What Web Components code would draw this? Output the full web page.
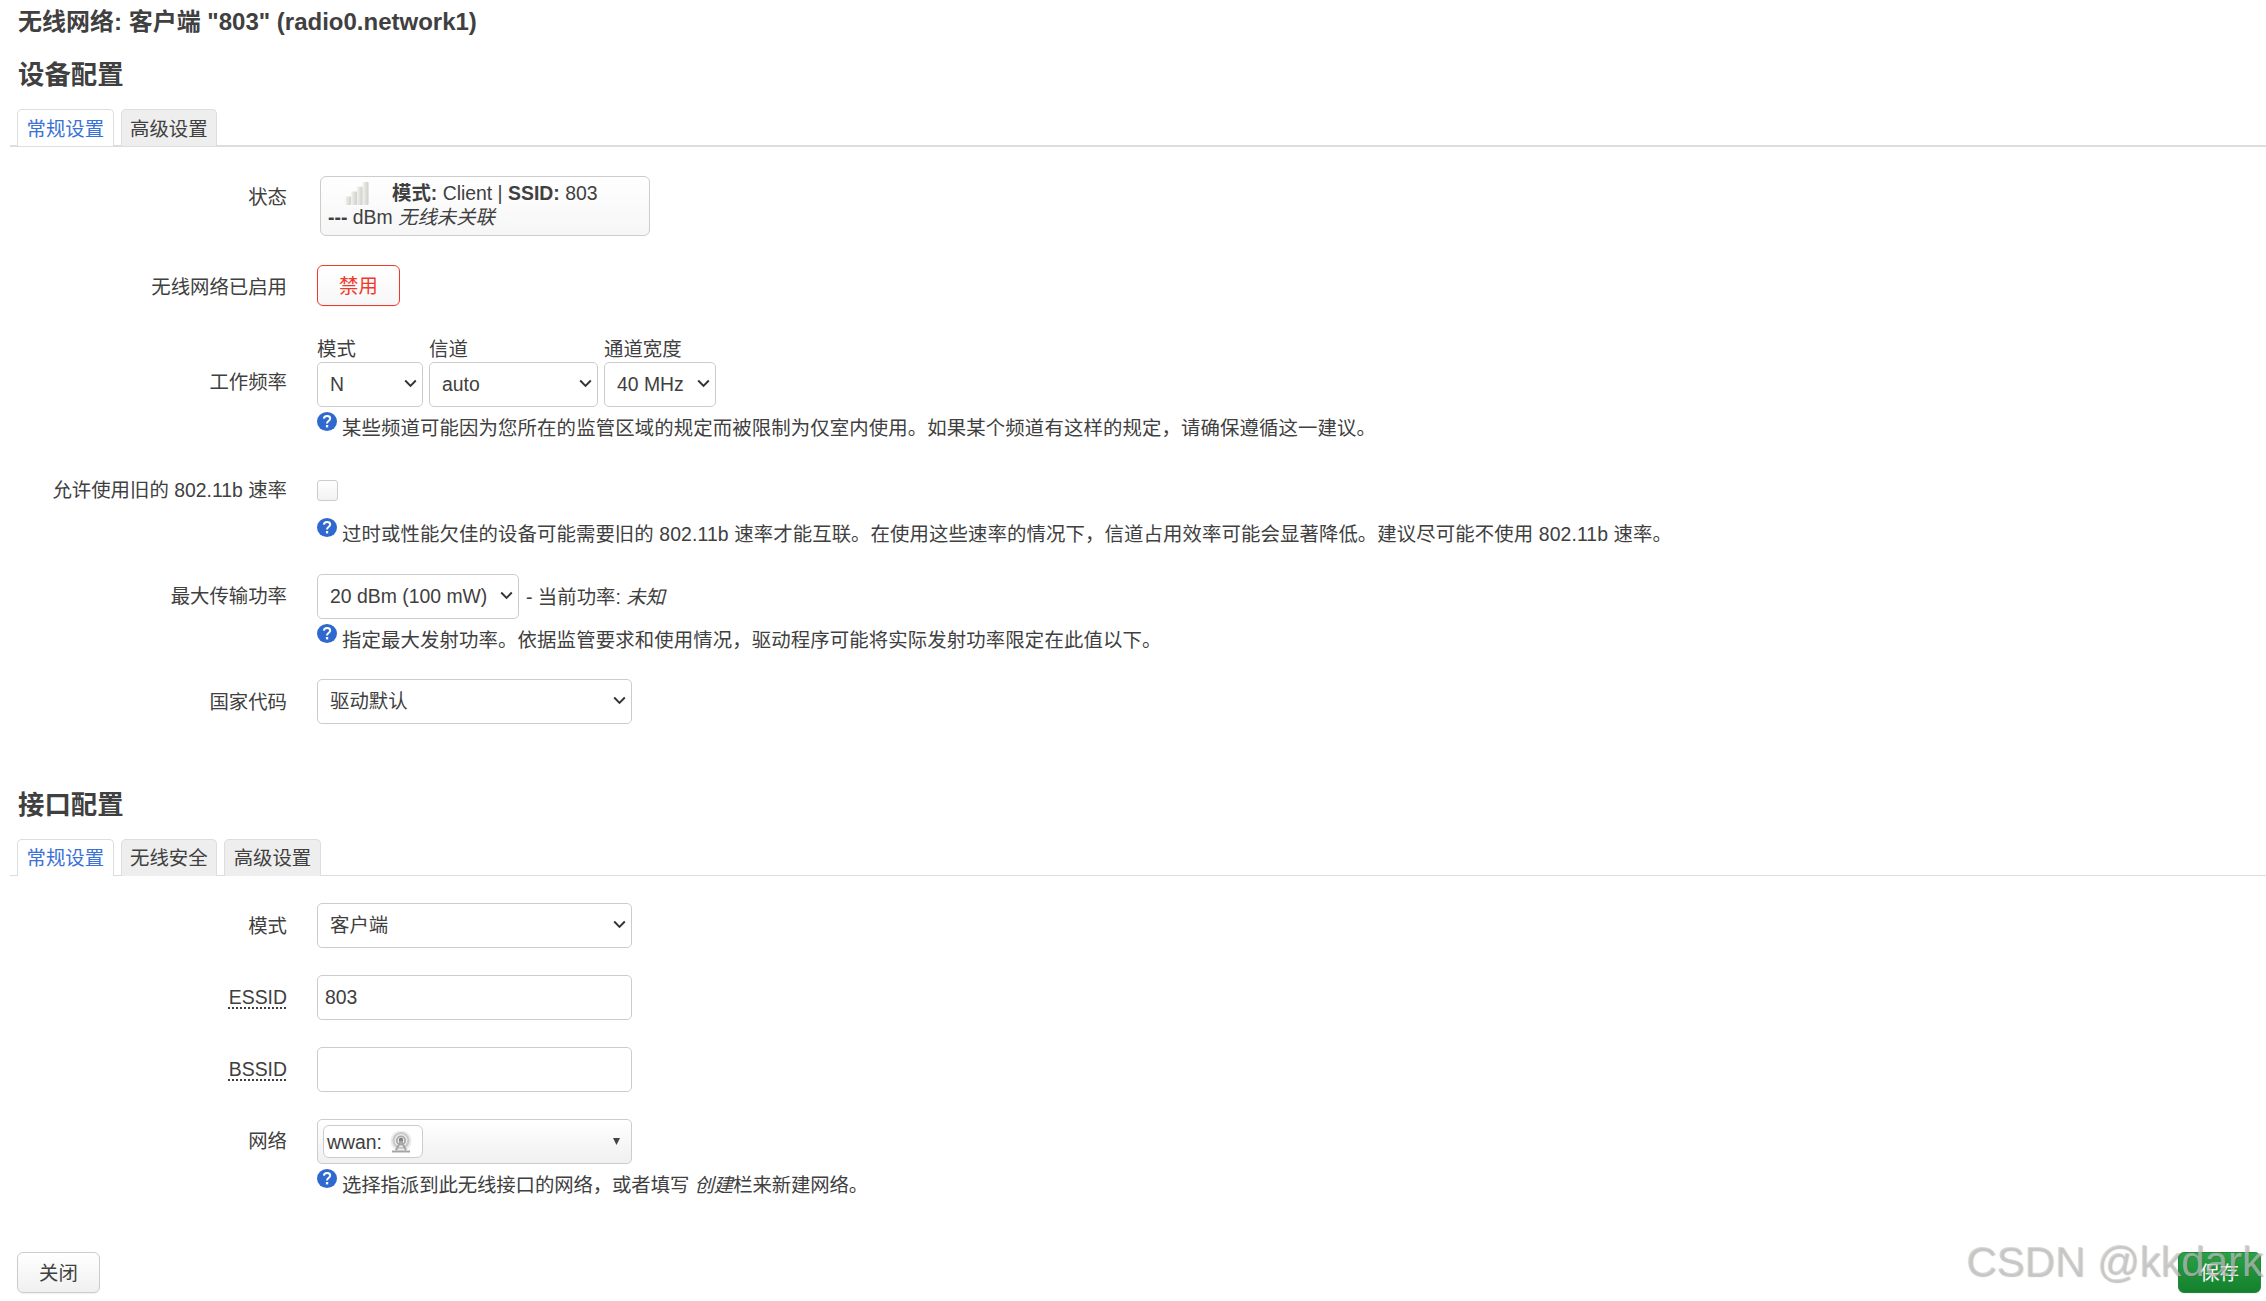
<!DOCTYPE html>
<html lang="zh-CN"><head><meta charset="utf-8"><title>无线网络</title>
<style>
html,body{margin:0;padding:0;background:#fff;overflow:hidden}
body{font:19.4px/28px "Liberation Sans","Noto Sans CJK SC",sans-serif;color:#404040}
abbr{text-decoration:underline dotted 2px;text-underline-offset:3px}
</style></head><body>
<x-page>
  <x-title>无线网络: 客户端 "803" (radio0.network1)</x-title>
  <x-h3>设备配置</x-h3>
  <x-tabs thick><x-tab active>常规设置</x-tab><x-tab>高级设置</x-tab></x-tabs>

  <x-row style="margin-top:29px;--lt:7px"><span slot="label">状态</span><x-status></x-status></x-row>
  <x-row style="margin-top:29px;--lt:8px"><span slot="label">无线网络已启用</span><x-btn kind="danger" style="width:83px;height:41px">禁用</x-btn></x-row>
  <x-row style="margin-top:30px;--lt:32px"><span slot="label">工作频率</span>
    <x-freq>
      <x-field label="模式"><x-select value="N" style="width:106px"></x-select></x-field>
      <x-field label="信道"><x-select value="auto" style="width:169px"></x-select></x-field>
      <x-field label="通道宽度"><x-select value="40 MHz" style="width:112px"></x-select></x-field>
    </x-freq>
    <x-help style="margin-top:5px;letter-spacing:.12px">某些频道可能因为您所在的监管区域的规定而被限制为仅室内使用。如果某个频道有这样的规定，请确保遵循这一建议。</x-help>
  </x-row>
  <x-row style="margin-top:38px;--lt:-4px"><span slot="label">允许使用旧的 802.11b 速率</span>
    <x-check></x-check>
    <x-help style="margin-top:17px;letter-spacing:.1px">过时或性能欠佳的设备可能需要旧的 802.11b 速率才能互联。在使用这些速率的情况下，信道占用效率可能会显著降低。建议尽可能不使用 802.11b 速率。</x-help>
  </x-row>
  <x-row style="margin-top:26px;--lt:8px"><span slot="label">最大传输功率</span>
    <x-inline><x-select value="20 dBm (100 mW)" style="width:202px"></x-select><span>- 当前功率: <em>未知</em></span></x-inline>
    <x-help style="margin-top:5px;letter-spacing:.12px">指定最大发射功率。依据监管要求和使用情况，驱动程序可能将实际发射功率限定在此值以下。</x-help>
  </x-row>
  <x-row style="margin-top:25px;--lt:9px"><span slot="label">国家代码</span><x-select value="驱动默认" style="width:315px"></x-select></x-row>

  <x-h3 style="margin-top:59px">接口配置</x-h3>
  <x-tabs style="--tp:3px"><x-tab active>常规设置</x-tab><x-tab>无线安全</x-tab><x-tab>高级设置</x-tab></x-tabs>

  <x-row style="margin-top:27px;--lt:9px"><span slot="label">模式</span><x-select value="客户端" style="width:315px"></x-select></x-row>
  <x-row style="margin-top:27px;--lt:8px"><abbr slot="label" title="Extended Service Set Identifier">ESSID</abbr><x-input style="width:315px">803</x-input></x-row>
  <x-row style="margin-top:27px;--lt:8px"><abbr slot="label" title="Basic Service Set Identifier">BSSID</abbr><x-input style="width:315px"></x-input></x-row>
  <x-row style="margin-top:27px;--lt:8px"><span slot="label">网络</span>
    <x-netpick></x-netpick>
    <x-help style="margin-top:5px;letter-spacing:-.1px">选择指派到此无线接口的网络，或者填写 <em>创建</em>栏来新建网络。</x-help>
  </x-row>

  <x-foot><x-btn style="width:83px;height:41px">关闭</x-btn><x-btn kind="save" style="width:83px;height:41px">保存</x-btn></x-foot>
  <x-mark>CSDN @kkdark</x-mark>
</x-page>
<script>
function def(name, html, init){
  const t=document.createElement('template'); t.innerHTML=html;
  customElements.define(name, class extends HTMLElement{
    constructor(){super();this.attachShadow({mode:'open'}).appendChild(t.content.cloneNode(true));}
    connectedCallback(){ if(init) init(this,this.shadowRoot); }
  });
}
def('x-page',`<style>:host{display:block;position:relative;height:1301px;overflow:hidden}</style><slot></slot>`);
def('x-title',`<style>:host{display:block;height:44px;line-height:44px;padding-left:18px;font-size:24px;font-weight:700}</style><slot></slot>`);
def('x-h3',`<style>:host{display:block;height:44px;margin-top:9px;line-height:44px;padding-left:18px;font-size:26.4px;font-weight:700}</style><slot></slot>`);
def('x-tabs',`<style>:host{display:flex;gap:7px;height:36px;margin:12px 0 0 10px;padding-left:7px;border-bottom:1px solid #ddd;box-sizing:content-box}
:host([thick]){border-bottom-width:2px}</style><slot></slot>`);
def('x-tab',`<style>:host{display:block;box-sizing:border-box;height:calc(100% + 1px);padding:var(--tp,4px) 8.5px 0;line-height:30px;background:#eee;border:1px solid #ddd;border-bottom:0;border-radius:5px 5px 0 0}
:host([active]){background:#fff;color:#3a72d8;position:relative}</style><slot></slot>`);
def('x-row',`<style>:host{display:grid;grid-template-columns:287px minmax(0,1fr);column-gap:30px}
.l{text-align:right;margin-top:var(--lt,0);line-height:28px}.c{min-width:0}</style>
<div class="l"><slot name="label"></slot></div><div class="c"><slot></slot></div>`);
def('x-status',`<style>:host{display:block;box-sizing:border-box;margin-left:3px;width:330px;height:60px;border:1px solid #ccc;border-radius:6px;background:linear-gradient(#fff,#f6f6f6);padding:4px 7px;line-height:24px}
svg{vertical-align:top;margin:1px 23px 0 17px}b{font-weight:700}em{font-style:italic}.d{font-weight:700}</style>
<div><svg width="24" height="23" viewBox="0 0 24 24"><defs><linearGradient id="g" x1="0" x2="1"><stop offset="0" stop-color="#f1f2ee"/><stop offset="1" stop-color="#cdcfc9"/></linearGradient></defs>
<rect x="0" y="15" width="6" height="9" rx="1" fill="url(#g)"/><rect x="6" y="10" width="6" height="14" rx="1" fill="url(#g)"/><rect x="12" y="5" width="6" height="19" rx="1" fill="url(#g)"/><rect x="18" y="0" width="6" height="24" rx="1" fill="url(#g)"/></svg><b>模式:</b> Client | <b>SSID:</b> 803</div>
<div><span class="d">---</span> dBm <em>无线未关联</em></div>`);
def('x-btn',`<style>:host{display:inline-flex;align-items:center;justify-content:center;box-sizing:border-box;border:1px solid #ccc;border-radius:6px;background:linear-gradient(#fff,#f0f0f0);box-shadow:0 1px 1px rgba(0,0,0,.06)}
:host([kind=danger]){border-color:#f0392b;color:#f0392b;background:linear-gradient(#fff,#f7f7f7)}
:host([kind=save]){border-color:#1c8a36;color:#fff;background:linear-gradient(#2ba146,#14802d)}</style><slot></slot>`);
def('x-freq',`<style>:host{display:flex;gap:6px;height:71px}</style><slot></slot>`);
def('x-field',`<style>:host{display:block}.h{height:26px;line-height:26px}</style><div class="h"></div><slot></slot>`,(el,s)=>{s.querySelector('.h').textContent=el.getAttribute('label');});
def('x-select',`<style>:host{display:block;position:relative;box-sizing:border-box;height:45px}
select{appearance:none;-webkit-appearance:none;box-sizing:border-box;width:100%;height:100%;margin:0;padding:0 24px 1px 12px;border:1px solid #ccc;border-radius:5px;background:#fff;color:#404040;font:inherit;outline:0}
svg{position:absolute;right:6px;top:17px;pointer-events:none}</style>
<select><option></option></select><svg width="13" height="9" viewBox="0 0 13 9"><path d="M1.2 1.5 6.5 7 11.8 1.5" fill="none" stroke="#333" stroke-width="1.9"/></svg>`,(el,s)=>{s.querySelector('option').textContent=el.getAttribute('value');});
def('x-inline',`<style>:host{display:flex;align-items:center;gap:7px}</style><slot></slot>`);
def('x-help',`<style>:host{display:flex;gap:5px;height:30px;white-space:nowrap}
svg{flex:none}.t{margin-top:2px;line-height:28px}</style>
<svg width="20" height="20" viewBox="0 0 20 20"><ellipse cx="10" cy="9.5" rx="10" ry="9.5" fill="#2f68cf"/><path d="M6.9 6.6C7.1 3.2 13 3 13.2 6.4 13.3 8.8 10 8.7 10 11.6" fill="none" stroke="#fff" stroke-width="2"/><rect x="8.9" y="13" width="2.3" height="2.4" fill="#fff"/></svg><div class="t"><slot></slot></div>`);
def('x-check',`<style>:host{display:block;box-sizing:border-box;width:21px;height:21px;border:1px solid #ccc;border-radius:3px;background:linear-gradient(#fff,#f2f2f2)}</style>`);
def('x-input',`<style>:host{display:block;box-sizing:border-box;height:45px;line-height:42px;padding:0 7px;border:1px solid #ccc;border-radius:5px;background:#fff}</style><div contenteditable="true" style="outline:0;height:100%"><slot></slot></div>`);
def('x-netpick',`<style>:host{display:flex;align-items:center;justify-content:space-between;box-sizing:border-box;width:315px;height:45px;padding:0 11px 0 5px;border:1px solid #ccc;border-radius:5px;background:linear-gradient(#fff,#f0f0f0)}
.chip{display:flex;align-items:center;box-sizing:border-box;width:100px;height:33px;padding:0 3px;border:1px solid #ccc;border-radius:6px;background:#fff;gap:7px}</style>
<div class="chip"><span>wwan:</span><svg width="24" height="22" viewBox="0 0 24 22"><circle cx="12" cy="10" r="10.5" fill="#ececec"/><circle cx="12" cy="9.5" r="7.5" fill="none" stroke="#c9c9c9" stroke-width="2.2"/><circle cx="12" cy="9.5" r="4.2" fill="none" stroke="#a8a8a8" stroke-width="1.8"/><circle cx="12" cy="9" r="2.2" fill="#7d7d7d"/><path d="M12 10 7 19M12 10l5 9M3 20.5h18" fill="none" stroke="#a5a5a5" stroke-width="2"/></svg></div>
<svg width="7" height="7" viewBox="0 0 7 7"><path d="M0 0h7L3.5 7z" fill="#444"/></svg>`);
def('x-foot',`<style>:host{display:flex;justify-content:space-between;margin-top:53px;padding:0 5px 0 17px}</style><slot></slot>`);
def('x-mark',`<style>:host{position:absolute;left:1966px;top:1238px;font:42px/48px "Liberation Sans",sans-serif;color:rgba(200,200,200,.65);text-shadow:1px 1px 1px rgba(90,90,90,.35);white-space:nowrap;pointer-events:none}</style><slot></slot>`);
</script>
</body></html>
